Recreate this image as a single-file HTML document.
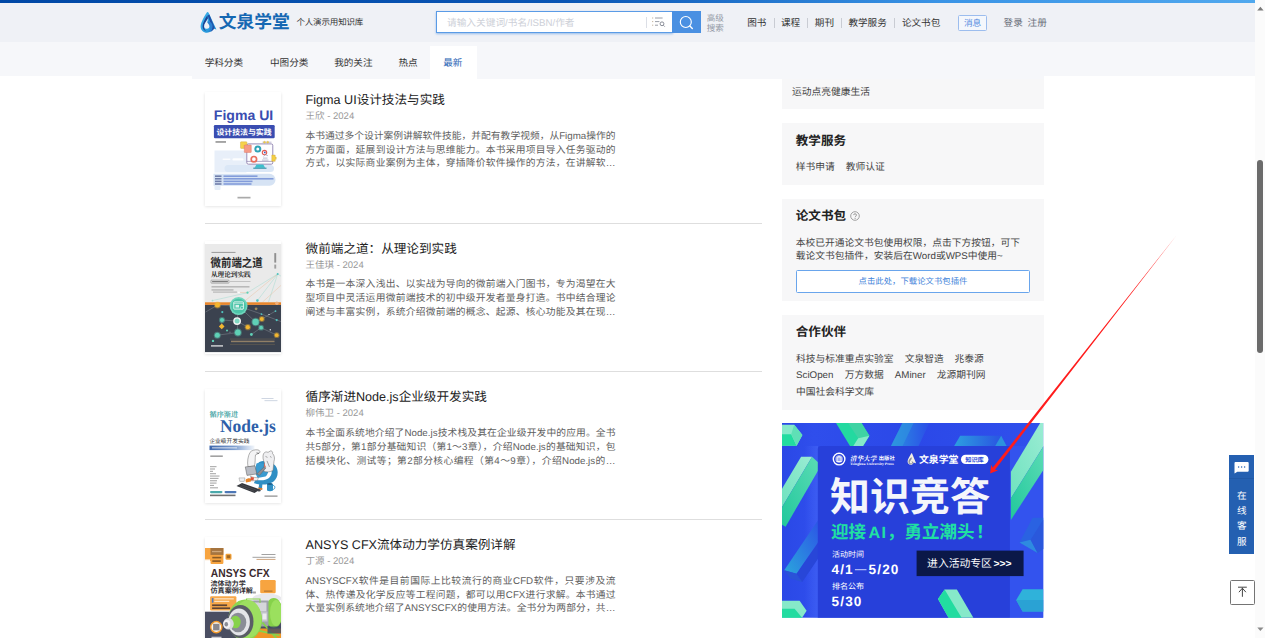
<!DOCTYPE html>
<html lang="zh-CN"><head><meta charset="utf-8"><title>文泉学堂</title><style>
*{margin:0;padding:0;box-sizing:border-box}
html,body{width:1265px;height:638px;overflow:hidden;background:#fff}
body{position:relative;text-rendering:geometricPrecision;font-family:"Liberation Sans","Noto Sans CJK SC",sans-serif;font-size:9.6px;color:#333;line-height:13.6px}
.abs{position:absolute}
.nw{white-space:nowrap}
#topbar{left:0;top:0;width:1254.5px;height:3.4px;background:linear-gradient(90deg,#0048a6 0%,#0a55b4 45%,#3a94e6 75%,#50a8ee 100%)}
#header{left:0;top:0;width:1254.5px;height:41.7px;background:#eff1f6}
#tabs{left:0;top:41.7px;width:1254.5px;height:34.8px;background:#f6f7fa}
#tabs2{left:192px;top:41.7px;width:851.8px;height:37.8px;background:#f6f7fa}
#tabact{left:430.4px;top:45.6px;width:46.2px;height:33.9px;background:#fff}
.tab{top:57.4px;height:14px;line-height:14px;font-size:9.6px;color:#333}
.hnav{top:17.2px;height:14px;line-height:14px;font-size:9.6px;color:#333}
.sep{top:18.1px;width:1px;height:9.5px;background:#c9ccd3}
.bk{left:205.2px;width:75.8px;height:113.8px;background:#fff;box-shadow:0 .8px 3px rgba(0,0,0,.13);overflow:hidden}
.bt{left:305.6px;font-size:12.6px;line-height:16px;color:#222}
.ba{left:305.6px;font-size:9.5px;line-height:12px;color:#999}
.bd{left:305.6px;width:309.9px;font-size:9.75px;line-height:13.85px;color:#606060;text-align:justify;text-align-last:justify}
.hr{left:204.6px;width:557.6px;height:1px;background:#dedede}
.sb{left:781.8px;width:262px;background:#f7f7f8}
.sh{left:795.8px;font-size:12.55px;line-height:16px;font-weight:bold;color:#222}
.sl{left:795.8px;font-size:9.75px;line-height:12px;color:#444}
svg text{font-family:"Liberation Sans","Noto Sans CJK SC",sans-serif}
svg text.srf{font-family:"Liberation Serif","Noto Serif CJK SC",serif}
</style></head><body>
<div id="header" class="abs"></div>
<div id="topbar" class="abs"></div>
<svg class="abs" style="left:199px;top:9px" width="96" height="28" viewBox="0 0 96 28"><defs><linearGradient id="lg1" x1="0" y1="0" x2="1" y2="1"><stop offset="0" stop-color="#3fb2ea"/><stop offset="1" stop-color="#1d8fd6"/></linearGradient></defs><g transform="translate(-199,-9)"><path d="M207 12.200C205.500 14.500 200.600 22 200.600 26.400C200.600 30 203.400 32.700 207 32.700C210 32.700 212.600 31 213.200 28.600L216.400 29.600L208.600 12.800C208.200 12 207.500 11.800 207 12.200Z" fill="url(#lg1)"/><path d="M207.400 15.200C205 19 202.600 23 202.600 26.200C202.600 28.600 204 30.600 206.400 31.200C204.600 29.800 204 28 204.100 26.200C204.200 24 206.500 21 207.900 18.600Z" fill="#1c4394"/><path d="M207.700 15.400L209.400 14.600L214.600 27.600C214 29.600 212.600 31 210.400 31.900C212 30 212.200 28.200 211.500 26.300Z" fill="#1f4fa6"/><path d="M207.200 22C208.400 20.800 210.600 21.600 211.800 23.600C213 25.600 212.800 28 211.600 29.800C210.600 31.200 209 32 207.400 32.100C209.400 31 210.200 29.400 209.900 27.400C209.600 25.400 208.200 23.600 207.200 22Z" fill="#2a7fd0"/><path d="M207.900 18.600C206.500 21 204.100 24 204.100 26.200C204.100 27.800 205.400 28.800 207 28.800C208.600 28.800 209.600 27.600 209.400 26C209.200 24.600 208 23.400 207.200 22.200C207.600 21 208 19.800 207.900 18.600Z" fill="#eff1f6"/></g><text x="19.7" y="19.4" font-size="17.8" font-weight="bold" fill="#1568b3" textLength="71" lengthAdjust="spacingAndGlyphs">文泉学堂</text></svg>
<div class="abs nw" style="left:296.4px;top:16.4px;font-size:8.5px;line-height:12px;color:#333;letter-spacing:-.15px">个人演示用知识库</div>
<div class="abs" style="left:436.2px;top:10.9px;width:236.4px;height:22.5px;background:#fff;border:1px solid #5a9be6;box-shadow:0 1px 2px rgba(74,144,226,.55)"></div>
<div class="abs nw" style="left:447px;top:16.9px;font-size:9.7px;line-height:14px;color:#cdd0d8">请输入关键词/书名/ISBN/作者</div>
<div class="abs" style="left:646px;top:16.8px;width:1px;height:11px;background:#dcdfe6"></div>
<svg class="abs" style="left:651px;top:15px" width="16" height="14" viewBox="0 0 16 14"><g stroke="#9a9ea8" stroke-width="1" fill="none"><path d="M1.2 3h1M1.2 6.6h1M1.2 10.2h1" stroke="#b9a58a"/><path d="M4 3h7.6M4 6.6h4.400M4 10.2h3"/><circle cx="11" cy="8.8" r="1.9" stroke="#8a8e98"/><path d="M12.4 10.3l1.3 1.3" stroke="#8a8e98"/></g></svg>
<div class="abs" style="left:672.2px;top:10.8px;width:28.6px;height:22.4px;background:#4a90e2"></div>
<svg class="abs" style="left:676px;top:13px" width="22" height="20" viewBox="0 0 22 20"><circle cx="9.8" cy="9" r="5.5" fill="none" stroke="#fff" stroke-width="1.15"/><path d="M13.9 13.1l2.4 2.4" stroke="#fff" stroke-width="1.4" stroke-linecap="round"/></svg>
<div class="abs nw" style="left:706.8px;top:14px;font-size:8.5px;line-height:9.9px;color:#949aa6">高级<br>搜索</div>
<div class="abs nw hnav" style="left:747.2px">图书</div>
<div class="abs nw hnav" style="left:780.9px">课程</div>
<div class="abs nw hnav" style="left:814.8px">期刊</div>
<div class="abs nw hnav" style="left:848.4px">教学服务</div>
<div class="abs nw hnav" style="left:901.9px">论文书包</div>
<div class="abs sep" style="left:774px"></div>
<div class="abs sep" style="left:807.2px"></div>
<div class="abs sep" style="left:841.2px"></div>
<div class="abs sep" style="left:894.2px"></div>
<div class="abs nw" style="left:958px;top:15px;width:29.2px;height:15.6px;border:1px solid #9cbdee;border-radius:1.5px;background:#f4f7fc;color:#4f88de;font-size:8.7px;line-height:15.4px;text-align:center">消息</div>
<div class="abs nw hnav" style="left:1003.6px;color:#6a6f7a">登录</div>
<div class="abs nw hnav" style="left:1027.6px;color:#6a6f7a">注册</div>
<div id="tabs" class="abs"></div>
<div id="tabs2" class="abs"></div>
<div id="tabact" class="abs"></div>
<div class="abs nw tab" style="left:204.7px">学科分类</div>
<div class="abs nw tab" style="left:270.0px">中图分类</div>
<div class="abs nw tab" style="left:334.2px">我的关注</div>
<div class="abs nw tab" style="left:398.4px">热点</div>
<div class="abs nw tab" style="left:443.2px;color:#2b66b5">最新</div>
<div class="abs bk" style="top:92.1px"><svg class="abs" style="left:-.7px;top:-.7px" width="77.4" height="114.4" viewBox="204.5 91.4 77.4 114.4"><path d="M214 151h27c3 0 5 2 5 5v17h-32z" fill="#e8eff9"/><rect x="224" y="165.500" width="49.500" height="7" rx="3.500" fill="#dbe7f6"/><path d="M213 174.200h56a6 6 0 0 1 0 12h-56z" fill="#d6e3f4"/><rect x="214" y="186" width="6" height="4.500" rx="1" fill="#e4edf8"/><rect x="232" y="158.600" width="11" height="2.400" rx="1.200" fill="#fff" opacity=".9"/><rect x="222" y="158.900" width="8" height="1.600" rx=".8" fill="#fff" opacity=".8"/><text x="213.3" y="120.8" font-size="13.8" font-weight="bold" fill="#3a4db1" textLength="59.5" lengthAdjust="spacingAndGlyphs">Figma UI</text><rect x="213.400" y="125.500" width="60.800" height="13.200" rx="1.200" fill="#3a4db1"/><text x="215.9" y="135" font-size="7.9" font-weight="bold" fill="#fff" textLength="55.2" lengthAdjust="spacingAndGlyphs">设计技法与实践</text><rect x="215" y="141.500" width="10.500" height="1.700" fill="#555" opacity=".6"/><g fill="none"><rect x="246.300" y="144.300" width="26" height="20.300" rx="1.500" fill="#fdfdff" stroke="#7d6fa3" stroke-width=".8"/><path d="M246.300 161.800h26" stroke="#7d6fa3" stroke-width=".6"/><path d="M256 164.800l-1.800 3.400h10.400l-1.800-3.400z" fill="#3cc0cc"/><path d="M252.800 168.600h13.200" stroke="#2a8fa6" stroke-width="1.100"/><rect x="240" y="142.200" width="6.400" height="6.600" rx=".6" fill="#f6d24a" stroke="#c9a43a" stroke-width=".4"/><rect x="243.800" y="145.300" width="7" height="7.600" rx=".6" fill="#f59a86" stroke="#d9705c" stroke-width=".4"/><circle cx="257.300" cy="149.500" r="2.500" stroke="#2fa3b6" stroke-width="2"/><circle cx="264" cy="153" r="2.200" stroke="#e25c54" stroke-width="1.100"/><circle cx="264.300" cy="152.800" r=".9" fill="#3a5fc0"/><circle cx="253.400" cy="159.600" r="2.700" stroke="#e8705e" stroke-width="1.700"/><path d="M271.300 155.500h3.400v2h1v2.200h-1v2h-3.400z" fill="#f4cf46" stroke="#c9a43a" stroke-width=".4"/><path d="M261.500 160.500h6.500M262.500 158.500h4.500M263 156.700l2-1.500 2.500 1" stroke="#8a90b0" stroke-width=".6"/><path d="M262 142.600h9" stroke="#7d6fa3" stroke-width=".5"/><circle cx="264" cy="142.600" r="1" fill="#f4cf46" stroke="#c9a43a" stroke-width=".3"/><circle cx="267.200" cy="142.600" r="1" fill="#f4cf46" stroke="#c9a43a" stroke-width=".3"/></g><rect x="214.5" y="175.8" width="6.5" height="1.6" fill="#2b3a7a" opacity="0.6"/><rect x="214.5" y="178.4" width="6.5" height="1.6" fill="#2b3a7a" opacity="0.6"/><rect x="214.5" y="181" width="6.5" height="1.6" fill="#2b3a7a" opacity="0.6"/><rect x="214.5" y="183.6" width="6.5" height="1.6" fill="#2b3a7a" opacity="0.6"/><rect x="223" y="175.8" width="34" height="1.6" fill="#3f62c4" opacity="0.55"/><rect x="223" y="178.4" width="50" height="1.6" fill="#3f62c4" opacity="0.55"/><rect x="223" y="181" width="29" height="1.6" fill="#3f62c4" opacity="0.55"/><rect x="223" y="183.6" width="28" height="1.6" fill="#3f62c4" opacity="0.55"/><rect x="237" y="197.200" width="13" height="1.700" fill="#555" opacity=".5"/></svg></div>
<div class="abs nw bt" style="top:92.2px">Figma UI设计技法与实践</div>
<div class="abs nw ba" style="top:111.1px">王欣 - 2024</div>
<div class="abs nw bd" style="top:129.6px">本书通过多个设计案例讲解软件技能，并配有教学视频，从Figma操作的</div>
<div class="abs nw bd" style="top:143.5px">方方面面，延展到设计方法与思维能力。本书采用项目导入任务驱动的</div>
<div class="abs nw bd" style="top:157.3px">方式，以实际商业案例为主体，穿插降价软件操作的方法，在讲解软…</div>
<div class="abs hr" style="top:222.9px"></div>
<div class="abs bk" style="top:240.6px"><svg class="abs" style="left:-.7px;top:-.7px" width="77.4" height="114.4" viewBox="204.5 239.9 77.4 114.4"><rect x="204.500" y="243.900" width="77.400" height="59" fill="#eaeaea"/><rect x="204.500" y="304.600" width="77.400" height="47.400" fill="#3b424f"/><g stroke-width=".45" fill="none"><path d="M277.200 273.900L247 292.600M277.200 273.900L256.900 300.500M277.200 273.900L268 302M277.200 273.900L281.900 277M247 292.600L212 300.500" stroke="#8fd6c8" opacity=".85"/><path d="M277.200 273.900L243 302M281.900 284L262 302M247 292.600L238.500 292.300" stroke="#e9b48a" opacity=".8"/><path d="M238.100 306L217 305M238.100 306L236.600 321M238.100 306L255.100 321.900M255.100 321.900L261.300 318.900M255.100 321.900L260.600 327.600M236.600 321L221.500 319.900M236.600 321L237.400 332.400M236.600 321L247.300 327.100M221.500 319.900L221.200 326.300M261.300 318.900L275 311M260.600 327.600L276.200 335.100M237.400 332.400L216.800 335.100M238.100 306L261 314M217 305L205 312M250.900 334.400L260.600 327.600M261 314L281.900 322" stroke="#cfd6dc" opacity=".55"/></g><rect x="204.500" y="302.200" width="77.400" height="2.600" fill="#e8862c"/><rect x="211" y="251.8" width="24" height="1.100" fill="#555" opacity="0.5"/><text x="210.100" y="267" font-size="12" font-weight="bold" fill="#2a2a2a" textLength="52" lengthAdjust="spacingAndGlyphs">微前端之道</text><text class="srf" x="210.400" y="277" font-size="7" font-weight="bold" fill="#2a2a2a" textLength="39.800" lengthAdjust="spacingAndGlyphs">从理论到实践</text><rect x="210.500" y="280" width="18" height="3.100" rx=".6" fill="none" stroke="#444" stroke-width=".35"/><rect x="211.600" y="281" width="15.800" height="1.100" fill="#333" opacity="0.65"/><rect x="229.500" y="281.300" width="20.500" height=".3" fill="#666"/><rect x="211" y="286.200" width="38" height="1.100" fill="#555" opacity="0.45"/><rect x="211" y="289.300" width="22" height="1.100" fill="#555" opacity="0.45"/><rect x="212.500" y="291.500" width="24" height="1" fill="#555" opacity="0.4"/><rect x="273.800" y="253" width="1.900" height="9.500" fill="#444" opacity=".55"/><rect x="273.800" y="264.500" width="1.900" height="4" fill="#444" opacity=".45"/><circle cx="277.2" cy="273.9" r="1" fill="#4fc4c0"/><circle cx="247" cy="292.6" r="1.1" fill="#5fd0b6"/><circle cx="238.5" cy="292.3" r="0.9" fill="#fff"/><circle cx="256.9" cy="300.5" r="1.3" fill="#4fc4c0"/><circle cx="212" cy="300.5" r="0.9" fill="#9adfd0"/><circle cx="238.100" cy="306" r="9" fill="#6fd6bd"/><circle cx="238.100" cy="306" r="7.400" fill="#4cc4a8"/><rect x="233.300" y="301.800" width="9.600" height="7.200" rx=".5" fill="none" stroke="#fff" stroke-width=".8"/><path d="M233.300 303.300h9.600" stroke="#fff" stroke-width=".5"/><rect x="235" y="304.800" width="3.500" height="2.600" fill="#fff" opacity=".8"/><circle cx="241.400" cy="307.600" r="1.500" fill="#4cc4a8" stroke="#fff" stroke-width=".5"/><circle cx="217" cy="305" r="3.5" fill="#f2b630" opacity="0.4"/><circle cx="217" cy="305" r="2.5" fill="#f2b630"/><circle cx="221.5" cy="319.9" r="3.1" fill="#5fd0b6" opacity="0.4"/><circle cx="221.5" cy="319.9" r="2.1" fill="#5fd0b6"/><circle cx="236.600" cy="321" r="3.900" fill="#f4f4f4"/><circle cx="236.600" cy="321" r="2.500" fill="#7fd8c2"/><circle cx="255.1" cy="321.9" r="4.2" fill="#5fd0b6" opacity="0.4"/><circle cx="255.1" cy="321.9" r="3.2" fill="#5fd0b6"/><circle cx="261.3" cy="318.9" r="3" fill="#f2b630" opacity="0.4"/><circle cx="261.3" cy="318.9" r="2" fill="#f2b630"/><rect x="219.200" y="324.300" width="4" height="4" fill="#f2b630" transform="rotate(45 221.200 326.300)"/><circle cx="247.3" cy="327.1" r="3.1" fill="#f2b630" opacity="0.4"/><circle cx="247.3" cy="327.1" r="2.1" fill="#f2b630"/><circle cx="260.6" cy="327.6" r="2.9" fill="#5fd0b6" opacity="0.4"/><circle cx="260.6" cy="327.6" r="1.9" fill="#5fd0b6"/><circle cx="237.4" cy="332.4" r="3.9" fill="#5fd0b6" opacity="0.4"/><circle cx="237.4" cy="332.4" r="2.9" fill="#5fd0b6"/><circle cx="216.8" cy="335.1" r="3.5" fill="#5fd0b6" opacity="0.4"/><circle cx="216.8" cy="335.1" r="2.5" fill="#5fd0b6"/><circle cx="276.2" cy="335.1" r="2.9" fill="#f2b630" opacity="0.4"/><circle cx="276.2" cy="335.1" r="1.9" fill="#f2b630"/><circle cx="250.9" cy="334.4" r="1.4" fill="#5fd0b6"/><circle cx="212.5" cy="340.8" r="1.2" fill="#5fd0b6"/><circle cx="221.8" cy="312" r="1.1" fill="#4fc4c0"/><circle cx="276.2" cy="320" r="1.1" fill="#4fc4c0"/><circle cx="275" cy="311" r="0.9" fill="#4fc4c0"/><circle cx="261" cy="314" r="0.9" fill="#4fc4c0"/><circle cx="255.6" cy="308.7" r="1.4" fill="#a08a5a"/><circle cx="276.4" cy="303.2" r="1.7" fill="#f2b07a"/><circle cx="226.5" cy="330.5" r="1" fill="#5fd0b6"/><circle cx="229.5" cy="332.8" r="1.3" fill="#565d6b"/><rect x="269.200" y="329.100" width="1.200" height="1.200" fill="#fff"/><rect x="268" y="313.900" width="1" height="1" fill="#fff"/><path d="M229.500 339h45M229.500 344.300h45" stroke="#d9a85a" stroke-width=".25" opacity=".8"/><rect x="230.500" y="340.600" width="43.500" height="1.500" fill="#d9b27a" opacity="0.55"/><rect x="210.500" y="345" width="12" height="1.600" fill="#f0f0f0" opacity="0.75"/></svg></div>
<div class="abs nw bt" style="top:240.7px">微前端之道：从理论到实践</div>
<div class="abs nw ba" style="top:259.6px">王佳琪 - 2024</div>
<div class="abs nw bd" style="top:278.1px">本书是一本深入浅出、以实战为导向的微前端入门图书，专为渴望在大</div>
<div class="abs nw bd" style="top:292.0px">型项目中灵活运用微前端技术的初中级开发者量身打造。书中结合理论</div>
<div class="abs nw bd" style="top:305.8px">阐述与丰富实例，系统介绍微前端的概念、起源、核心功能及其在现…</div>
<div class="abs hr" style="top:370.7px"></div>
<div class="abs bk" style="top:389.3px"><svg class="abs" style="left:-.7px;top:-.7px" width="77.4" height="114.4" viewBox="204.5 388.6 77.4 114.4"><rect x="261" y="397.800" width="12" height="0.800" fill="#7a8db0" opacity="0.45"/><rect x="264" y="399.900" width="13" height="0.800" fill="#7a8db0" opacity="0.45"/><text class="srf" x="209" y="416.200" font-size="7.300" font-weight="bold" fill="#3a9f9f" textLength="28.600" lengthAdjust="spacingAndGlyphs">循序渐进</text><text class="srf" x="219.500" y="432" font-size="18" font-weight="bold" fill="#2e5fa9" textLength="55.800" lengthAdjust="spacingAndGlyphs">Node.js</text><text x="208.900" y="442.700" font-size="5.700" fill="#2a2a2a" textLength="40" lengthAdjust="spacingAndGlyphs">企业级开发实践</text><defs><linearGradient id="c2g" x1="0" y1="0" x2="1" y2="0"><stop offset="0" stop-color="#3d66ab"/><stop offset=".55" stop-color="#7f9fd0"/><stop offset="1" stop-color="#f2f6fb"/></linearGradient></defs><rect x="209" y="445.200" width="45" height="4.500" fill="url(#c2g)"/><rect x="211.500" y="446.900" width="25" height="1.100" fill="#fff" opacity=".7"/><rect x="209.800" y="455" width="12.500" height="1.600" fill="#555" opacity="0.55"/><rect x="209.500" y="465.700" width="6.500" height="1.100" fill="#555" opacity="0.5"/><rect x="209.500" y="468.050" width="5" height="1.100" fill="#555" opacity="0.5"/><rect x="209.500" y="470.400" width="3" height="1.100" fill="#555" opacity="0.5"/><rect x="209.500" y="472.750" width="6" height="1.100" fill="#555" opacity="0.5"/><rect x="209.500" y="475.100" width="9.500" height="1.100" fill="#555" opacity="0.5"/><rect x="209.500" y="477.450" width="8.500" height="1.100" fill="#555" opacity="0.5"/><rect x="209.500" y="479.800" width="7" height="1.100" fill="#555" opacity="0.5"/><rect x="209.500" y="482.150" width="6.500" height="1.100" fill="#555" opacity="0.5"/><rect x="209.500" y="484.500" width="4" height="1.100" fill="#555" opacity="0.5"/><rect x="209.500" y="486.850" width="8" height="1.100" fill="#555" opacity="0.5"/><g stroke-linejoin="round"><path d="M258 462c6-3 14-1 17.500 4 3 5 2 12-3 15.500-5 3-13 3.500-19 1l1.500-3.500c5 1.500 10 1 13.500-1.500 3-2.500 3.500-6.500 1.500-9.500-2.500-3.500-7.500-4.500-11-3z" fill="#2f8fc4"/><path d="M256 463c4-1.500 9 .5 11 4 1.500 3 .5 7-2 9l-8 1.500-3-7z" fill="#3a9bd0"/><path d="M259 482l-1 5.500 3.500.5.500-5.500z" fill="#2f8fc4"/><path d="M258 487l4 .800-.300 1.800-4-.800z" fill="#d9782a"/><path d="M249.500 452c1.500-2 5-3 8-2.500 2 .5 2.500 2 1.500 3l-4 2c-.500 3 0 7-1 11l-6.500 1c-1-5 0-11 2-14.500z" fill="#f4f4f5" stroke="#666" stroke-width=".5"/><path d="M256 452.500l2.500.500" stroke="#333" stroke-width=".6" fill="none"/><path d="M263 453.500c1-2 3-2.500 4.500-1.500l2.500-1.500c1.500 0 2.500 1 2 2.500 2 2 2.500 5 1.500 8l-1 9c-3 2-7 2-9.500.500l1-8c-1.500-3-2-6.500-1-9z" fill="#efeff1" stroke="#666" stroke-width=".5"/><path d="M265 456l2 1m2.500-1l1.500 1m-4.500 3.500l2.500 6" stroke="#555" stroke-width=".5" fill="none"/><path d="M263.500 462l1.800 4.500-1.300.500z" fill="#e0523a"/><path d="M244.800 466.500l9.700-1 1.800 8-9.800 1.500z" fill="#b9bcc4" stroke="#555" stroke-width=".5"/><path d="M256.300 473.500l7.200-7 2 1-6.500 7.500z" fill="#8a8d96" stroke="#555" stroke-width=".4"/><path d="M250 475.500c2 1.500 5 2 8 1.500l-1 3-6 .5z" fill="#f1f1f3" stroke="#666" stroke-width=".4"/><path d="M245 479.500c1.500-1.500 4-2 6-1l-.5 2.500-5 1z" fill="#e8872a"/><path d="M250.500 476.500l3 .5-.500 3-3-.500z" fill="#e0523a"/><path d="M238.500 477.500h6l-.800 3.500h-4.400z" fill="#eef0f2" stroke="#777" stroke-width=".4"/><path d="M236 485.600l5.500-3.100 18 6.500-5.500 3.500z" fill="#34363c"/><path d="M238.500 485.400l15.500 5.600M240.500 484.200l15.500 5.600" stroke="#777" stroke-width=".35" fill="none"/><ellipse cx="258.500" cy="490" rx="1.800" ry="1.100" fill="#44464c"/><path d="M266.500 483.500c2-.8 4.500-.8 6 0v6.500c-1.500 1-4.500 1-6 0z" fill="#2f8fc4"/><ellipse cx="269.250" cy="483.600" rx="2.750" ry=".9" fill="#1f5f8a"/><path d="M272.500 485c2.500 0 2.500 4 0 4" stroke="#2f8fc4" stroke-width=".9" fill="none"/></g><rect x="209.500" y="490.600" width="12.500" height="2.200" rx="1.100" fill="#2a9a9c" opacity=".85"/><rect x="224" y="490.600" width="12" height="2.200" rx="1.100" fill="#2e5fa9" opacity=".85"/><rect x="209.500" y="494.200" width="25.500" height="1.600" fill="#333" opacity="0.7"/><rect x="264" y="495" width="13" height="1.500" fill="#555" opacity="0.55"/></svg></div>
<div class="abs nw bt" style="top:389.4px">循序渐进Node.js企业级开发实践</div>
<div class="abs nw ba" style="top:408.3px">柳伟卫 - 2024</div>
<div class="abs nw bd" style="top:426.8px">本书全面系统地介绍了Node.js技术栈及其在企业级开发中的应用。全书</div>
<div class="abs nw bd" style="top:440.7px">共5部分，第1部分基础知识（第1～3章），介绍Node.js的基础知识，包</div>
<div class="abs nw bd" style="top:454.5px">括模块化、测试等；第2部分核心编程（第4～9章），介绍Node.js的…</div>
<div class="abs hr" style="top:518.8px"></div>
<div class="abs bk" style="top:537.2px"><svg class="abs" style="left:-.7px;top:-.7px" width="77.4" height="114.4" viewBox="204.5 536.5 77.4 114.4"><rect x="204.500" y="611.200" width="77.400" height="40" fill="#4a4e62"/><path d="M204.500 547.500h18.400v14.800a1.2 1.2 0 0 1-1.2 1.2h-10.500a1.2 1.2 0 0 1-1.2-1.2v-1.800h-5.500z" fill="#f7a440"/><rect x="210" y="547.500" width="12.900" height="6.900" fill="#a5743f"/><rect x="211.500" y="550.400" width="9.500" height="1.300" fill="#d9b48a" opacity="0.8"/><rect x="211.800" y="556.300" width="9" height="1.600" fill="#5a3a1a" opacity="0.7"/><rect x="211.800" y="559.800" width="8.500" height="1.600" fill="#5a3a1a" opacity="0.7"/><rect x="204.500" y="559" width="5" height="1.400" fill="#fff"/><rect x="225" y="553.300" width="6" height="5.900" rx="1.300" fill="#f2a23a"/><rect x="226.200" y="554.700" width="3.600" height="3" fill="#6b3f14" opacity=".6"/><rect x="261" y="553.500" width="14" height="1" fill="#555" opacity="0.55"/><rect x="252" y="556.300" width="23" height="1" fill="#555" opacity="0.55"/><rect x="256" y="558.400" width="19" height="1" fill="#b06a2a" opacity="0.6"/><text x="210.300" y="576.700" font-size="11.700" font-weight="bold" fill="#3b2a2d" textLength="58.800" lengthAdjust="spacingAndGlyphs">ANSYS CFX</text><text x="210" y="585.300" font-size="7" font-weight="bold" fill="#333035" textLength="35.200" lengthAdjust="spacingAndGlyphs">流体动力学</text><text x="210" y="592.500" font-size="7" font-weight="bold" fill="#333035" textLength="42.400" lengthAdjust="spacingAndGlyphs">仿真案例详解</text><rect x="252" y="591" width="3.400" height="2" fill="#666" opacity=".6"/><rect x="259.700" y="579.500" width="15.500" height="13.300" rx="1.200" fill="#f7a440"/><rect x="263.500" y="590" width="8.500" height="1.300" fill="#8a5a28" opacity="0.55"/><ellipse cx="266.500" cy="598" rx="14.500" ry="5" fill="#e6e6ea" opacity=".9"/><rect x="209.600" y="595.800" width="26.300" height="14.200" rx="1.300" fill="#f7a84a"/><rect x="211.400" y="597.600" width="1.500" height="4.600" fill="#4a78c0"/><rect x="213.800" y="597.800" width="19.500" height="1.100" fill="#fff" opacity="0.75"/><rect x="213.800" y="600.300" width="15" height="1.100" fill="#fff" opacity="0.75"/><rect x="211.600" y="603.900" width="15" height="1.700" fill="#3a2a2e" opacity="0.8"/><rect x="211.600" y="606.900" width="18" height="1.700" fill="#3a2a2e" opacity="0.8"/><ellipse cx="273.300" cy="612.500" rx="9" ry="15" fill="#86d24a"/><ellipse cx="275.500" cy="612.500" rx="6" ry="13" fill="#9be05e"/><path d="M250 600h18v26h-18z" fill="#9ea1aa"/><path d="M254 602h12v9h-12z" fill="#d5d6db"/><path d="M258 611h9v10h-9z" fill="#c2c4ca"/><rect x="262" y="613" width="4" height="6" fill="#ececef"/><path d="M246 605v-6.500h13.500v4" fill="none" stroke="#86d24a" stroke-width="1.100"/><path d="M237 628h44v10h-44z" fill="#ef9526"/><path d="M262 622l14 16M257 630l22 5" stroke="#86d24a" stroke-width="1.800" fill="none"/><path d="M267 626h14v7h-14z" fill="#3f4a66" opacity=".8"/><ellipse cx="244.600" cy="619.500" rx="17" ry="20.500" fill="#8cd650"/><ellipse cx="247.500" cy="618.500" rx="13.500" ry="19" fill="#9ee062" opacity=".9"/><ellipse cx="240" cy="621" rx="13" ry="16.500" fill="#5a5d66"/><ellipse cx="238.600" cy="621.500" rx="10.800" ry="13.600" fill="#e4e5e9"/><ellipse cx="237.500" cy="622" rx="8.300" ry="9.800" fill="#8a8d96"/><ellipse cx="235" cy="621.500" rx="5.200" ry="6.300" fill="#86d24a"/><ellipse cx="228" cy="623.300" rx="5.300" ry="5.800" fill="#d9dade"/><ellipse cx="226.300" cy="623.600" rx="3.600" ry="4.200" fill="#f2f2f4"/><ellipse cx="225.800" cy="623.800" rx="1.800" ry="2.200" fill="#8a8d96"/><circle cx="215.800" cy="626.600" r="5.600" fill="#fbf6ec" stroke="#f39a2c" stroke-width="1.400"/><rect x="212.600" y="623.300" width="6.400" height="6.600" fill="#5a5a66" opacity=".7"/><rect x="211" y="636.200" width="10" height="1.400" fill="#e8e8ee" opacity="0.8"/></svg></div>
<div class="abs nw bt" style="top:537.3px">ANSYS CFX流体动力学仿真案例详解</div>
<div class="abs nw ba" style="top:556.2px">丁源 - 2024</div>
<div class="abs nw bd" style="top:574.7px">ANSYSCFX软件是目前国际上比较流行的商业CFD软件，只要涉及流</div>
<div class="abs nw bd" style="top:588.6px">体、热传递及化学反应等工程问题，都可以用CFX进行求解。本书通过</div>
<div class="abs nw bd" style="top:602.4px">大量实例系统地介绍了ANSYSCFX的使用方法。全书分为两部分，共…</div>
<div class="abs sb" style="top:79.4px;height:29.3px"></div>
<div class="abs nw sl" style="left:792px;top:87.3px">运动点亮健康生活</div>
<div class="abs sb" style="top:123.4px;height:61.3px"></div>
<div class="abs nw sh" style="top:132.7px">教学服务</div>
<div class="abs nw sl" style="top:162.4px">样书申请</div><div class="abs nw sl" style="left:845.8px;top:162.4px">教师认证</div>
<div class="abs sb" style="top:199px;height:101.6px"></div>
<div class="abs nw sh" style="top:208px">论文书包</div>
<svg class="abs" style="left:850px;top:210.900px" width="10" height="10" viewBox="0 0 10 10"><circle cx="5" cy="5" r="4.300" fill="none" stroke="#909090" stroke-width=".85"/><path d="M3.600 4.100c0-1.800 2.900-1.800 2.900 0 0 1-1.400 1.100-1.400 2.200" fill="none" stroke="#888" stroke-width=".85"/><circle cx="5.100" cy="7.500" r=".55" fill="#888"/></svg>
<div class="abs nw sl" style="top:236.7px;line-height:13.3px">本校已开通论文书包使用权限，点击下方按钮，可下<br>载论文书包插件，安装后在Word或WPS中使用~</div>
<div class="abs nw" style="left:795.8px;top:270px;width:234.4px;height:22.6px;border:1px solid #69a5ec;border-radius:1.5px;background:#fff;color:#4585da;font-size:8.4px;line-height:21.6px;text-align:center">点击此处，下载论文书包插件</div>
<div class="abs sb" style="top:314.7px;height:95px"></div>
<div class="abs nw sh" style="top:324.3px">合作伙伴</div>
<div class="abs nw sl" style="left:796px;top:354.1px">科技与标准重点实验室</div><div class="abs nw sl" style="left:904.8px;top:354.1px">文泉智造</div><div class="abs nw sl" style="left:954.6px;top:354.1px">兆泰源</div>
<div class="abs nw sl" style="left:796px;top:370.4px">SciOpen</div><div class="abs nw sl" style="left:844.8px;top:370.4px">万方数据</div><div class="abs nw sl" style="left:894.8px;top:370.4px">AMiner</div><div class="abs nw sl" style="left:936.8px;top:370.4px">龙源期刊网</div>
<div class="abs nw sl" style="left:796px;top:386.6px">中国社会科学文库</div>
<svg class="abs" style="left:782.4px;top:423.3px" width="261.2" height="194.7" viewBox="782.4 423.3 261.2 194.7"><defs><linearGradient id="b1" x1="0" y1="0" x2="1" y2="0"><stop offset="0" stop-color="#2c9fe0"/><stop offset=".8" stop-color="#2a5be2"/><stop offset="1" stop-color="#2a50e4"/></linearGradient><linearGradient id="b2" x1="0" y1="1" x2="1" y2="0"><stop offset="0" stop-color="#2aa6dc"/><stop offset="1" stop-color="#2c55e6"/></linearGradient><linearGradient id="b3" x1="0" y1="0" x2="1" y2="0"><stop offset="0" stop-color="#2a8fe0"/><stop offset=".5" stop-color="#2b6fe4"/><stop offset="1" stop-color="#2b4ee8"/></linearGradient><linearGradient id="g1" x1="0" y1="1" x2="1" y2="0"><stop offset="0" stop-color="#6fe2bf"/><stop offset="1" stop-color="#9aecd3"/></linearGradient><linearGradient id="g2" x1="0" y1="1" x2="1" y2="0"><stop offset="0" stop-color="#22c89c"/><stop offset="1" stop-color="#5adbb4"/></linearGradient><linearGradient id="bgG" x1="0" y1="0" x2="1" y2="0"><stop offset="0" stop-color="#2a48e6"/><stop offset=".12" stop-color="#2f4eec"/><stop offset=".5" stop-color="#2b48e8"/><stop offset="1" stop-color="#3050ec"/></linearGradient><linearGradient id="lf" x1="0" y1="0" x2="1" y2="0"><stop offset="0" stop-color="#4566f6" stop-opacity="0"/><stop offset="1" stop-color="#4566f6" stop-opacity=".6"/></linearGradient></defs><rect x="782.4" y="423.3" width="261.2" height="194.7" fill="url(#bgG)"/><rect x="1010.3" y="446.3" width="33.3" height="171.7" fill="#3353ee"/><rect x="805" y="446.3" width="13.4" height="171.7" fill="url(#lf)"/><polygon points="782.4,425 794.6,425 802.8,435.3 797,446 782.4,446" fill="#86e9c9"/><polygon points="782.4,434.6 791.6,434.6 797,446 782.4,446" fill="#22dca0"/><polygon points="794.6,425 802.8,435.3 797,446 791.6,434.6" fill="#5fe0b6"/><polygon points="836.4,423.3 861.9,423.3 869.8,436 863.5,446.3 850.4,446.3" fill="#23d9a0"/><polygon points="848.5,423.3 861.9,423.3 869.8,436 858.6,438.6" fill="#3fd3a4"/><polygon points="853.7,446.3 858.6,438.6 869.8,436 863.5,446.3" fill="#86e9c9"/><polygon points="891.4,446.3 902.8,423.3 929.7,423.3 919,446.3" fill="url(#b3)"/><polygon points="891.4,446.3 902.8,423.3 914,423.3 903,446.3" fill="#2f9ade" opacity=".55"/><polygon points="954.6,446.3 960.6,436.1 1001.6,436.1 1007,446.3" fill="url(#b1)"/><polygon points="995.6,446.3 1001.6,436.1 1007,446.3" fill="#2c92de"/><polygon points="1040.6,423.3 1043.6,423.3 1043.6,447 1011.3,498.6 1011.3,472" fill="url(#g1)"/><polygon points="1043.6,447 1043.6,470.5 1011.3,520.3 1011.3,498.6" fill="url(#g2)"/><polygon points="1033,518 1043.6,518 1043.6,549.3 1038,553.4 1019.9,542.7" fill="#2a62e2"/><polygon points="1019.9,542.7 1031,540 1038,553.4" fill="#2e8ae0"/><polygon points="1031,540 1043.6,520 1043.6,549.3 1038,553.4" fill="#2a58dc"/><polygon points="1016.6,600.2 1023,589.6 1043.6,589.6 1043.6,611.8 1023,611.8" fill="#2fb2da"/><polygon points="1016.6,600.2 1043.6,600.2 1043.6,611.8 1023,611.8" fill="#2aa2d4"/><polygon points="801.5,457 812.5,457 782.4,507.5 782.4,489" fill="url(#g1)"/><polygon points="812.5,457 818.4,462.5 818.4,471 786,527 782.4,525 782.4,507.5" fill="url(#g2)"/><polygon points="818.4,520.5 818.4,542.7 797,574 784.6,570.6" fill="url(#b2)"/><polygon points="784.6,570.6 797,574 802.7,582.2 790.3,578.9" fill="#2a52d8"/><polygon points="818.4,542.7 818.4,559 802.7,582.2 797,574" fill="#2846d8"/><polygon points="782.4,601 800,601 807,611 802.5,618 782.4,618" fill="#86e9c9"/><polygon points="782.4,609 795,609 802.5,618 782.4,618" fill="#22dca0"/><path d="M818.2 618V449.6a3.3 3.3 0 0 1 3.3-3.3H1010.3V618z" fill="#2740da"/><rect x="808" y="446.3" width="10.2" height="171.7" fill="#3b5af2" opacity=".0"/><polygon points="938.4,599.4 945,589.9 957.3,589.9 973.8,618 949,618" fill="#86e9c9"/><polygon points="938.4,599.4 945,589.9 962,618 949,618" fill="#22dca0"/><circle cx="839.5" cy="459.4" r="5.8" fill="none" stroke="#fff" stroke-width="1.4"/><circle cx="839.5" cy="459.4" r="3.8" fill="#fff" opacity=".55"/><path d="M837.6 457.4h3.8v4.4h-3.8z M838.3 456.6h2.4 M836.8 461.8h5.4" stroke="#fff" stroke-width=".7" fill="none"/><text class="srf" x="0.200" y="0.400" font-size="6.700" font-weight="bold" fill="#fff" textLength="26.400" lengthAdjust="spacingAndGlyphs" transform="translate(850.4,460.9) skewX(-10)">清华大学</text><text x="879.200" y="460.400" font-size="5.300" font-weight="bold" fill="#fff" textLength="16" lengthAdjust="spacingAndGlyphs">出版社</text><text class="srf" x="850.500" y="465.600" font-size="3.600" font-weight="bold" fill="#fff" textLength="43.600" lengthAdjust="spacingAndGlyphs">Tsinghua University Press</text><path d="M911.6 453.7c.4-.3.8-.2 1 .3l3.9 9.5c-1.1-.1-1.9-.4-2.4-1-.2 1.5-1.4 2.6-2.900 2.600-1.900 0-3.200-1.400-3.200-3.300 0-2.300 2.100-5.100 3.600-8.100z" fill="#f3efe4"/><path d="M911.7 457.2c.9 1.3.4 2.3-.5 3.400-.9 1.100-1.300 2-.8 2.800.5.8 1.700.6 2-.4.2-.7-.2-1.200-.8-1.400 1.300-.3 2.200.5 1.800 1.700-.5 1.500-2.600 1.800-3.800.7-1.200-1.200-.8-3.100.2-4.500.8-1.100 1.600-1.400 1.900-2.300z" fill="#8b8f9a"/><text x="919.300" y="463.800" font-size="9.900" font-weight="bold" fill="#fff" textLength="39.600" lengthAdjust="spacingAndGlyphs">文泉学堂</text><rect x="961.4" y="455" width="27.4" height="9.4" rx="4.7" fill="#fff"/><text x="965.600" y="462.200" font-size="6.200" font-weight="bold" fill="#2a48d8" textLength="18.600" lengthAdjust="spacingAndGlyphs">知识库</text><text x="830.500" y="511.500" font-size="40" font-weight="bold" fill="#f4f6fb" textLength="160" lengthAdjust="spacingAndGlyphs">知识竞答</text><text y="538.500" font-size="17.500" font-weight="bold" fill="#20e0a2"><tspan x="831.500">迎接</tspan><tspan x="868.800" font-size="16.200" letter-spacing="1.300">AI</tspan><tspan x="887.500">，</tspan><tspan x="904.800">勇立潮头</tspan><tspan x="976.500">！</tspan></text><text x="832.300" y="557.600" font-size="7.900" fill="#fff" textLength="32" lengthAdjust="spacingAndGlyphs">活动时间</text><text x="832" y="574.800" font-size="13.600" font-weight="bold" fill="#fff" textLength="21" lengthAdjust="spacing">4/1</text><rect x="855.3" y="569.6" width="11.6" height=".9" fill="#dfe5ff"/><text x="869" y="574.800" font-size="13.600" font-weight="bold" fill="#fff" textLength="29.800" lengthAdjust="spacing">5/20</text><text x="832.300" y="588.900" font-size="7.900" fill="#fff" textLength="32.200" lengthAdjust="spacingAndGlyphs">排名公布</text><text x="832" y="606.500" font-size="13.600" font-weight="bold" fill="#fff" textLength="29.800" lengthAdjust="spacing">5/30</text><rect x="917" y="550.9" width="107" height="25.5" fill="#0b1848"/><text x="927.500" y="567.700" font-size="10.800" fill="#fff"><tspan>进入活动专区</tspan><tspan x="993.800" font-weight="bold" font-size="10.400">&gt;&gt;&gt;</tspan></text></svg>
<div class="abs" style="left:1229.4px;top:455.3px;width:24.6px;height:98.9px;background:#2460b1"></div>
<div class="abs" style="left:1229.4px;top:478px;width:24.6px;height:1px;background:#2059a6"></div>
<svg class="abs" style="left:1233px;top:460px" width="18" height="16" viewBox="0 0 18 16"><path d="M2.4 2h12.4c.5 0 .9.4.9.9v7.9c0 .5-.4.9-.9.9H4.4L1.5 13.4V2.9c0-.5.4-.9.9-.9z" fill="#fff"/><circle cx="5.6" cy="6.9" r=".75" fill="#2460b1"/><circle cx="8.6" cy="6.9" r=".75" fill="#2460b1"/><circle cx="11.6" cy="6.9" r=".75" fill="#2460b1"/></svg>
<div class="abs" style="left:1229.4px;top:488.7px;width:24.6px;font-size:9.6px;line-height:15.3px;color:#fff;text-align:center">在<br>线<br>客<br>服</div>
<div class="abs" style="left:1230.1px;top:580.1px;width:24.8px;height:24.7px;border:1px solid #747474;border-radius:1.5px;background:#fff"></div>
<svg class="abs" style="left:1235px;top:584px" width="15" height="16" viewBox="0 0 15 16"><g stroke="#444" stroke-width="1" fill="none"><path d="M3 3.200h8.800"/><path d="M7.400 3.600v9.200"/><path d="M3.900 8.200l3.500-4 3.500 4"/></g></svg>
<div class="abs" style="left:1254.5px;top:0;width:10.5px;height:638px;background:#fbfbfb"></div>
<div class="abs" style="left:1256.9px;top:160.4px;width:6.2px;height:192.8px;border-radius:3.1px;background:#6b6b6b"></div>
<svg class="abs" style="left:1254.5px;top:0" width="10.5" height="638" viewBox="0 0 10.5 638"><path d="M2.2 10.4l3.2-3.6 3.2 3.6z" fill="#7a7a7a"/><path d="M2.3 627.6l3.1 3.4 3.1-3.4z" fill="#8a8a8a"/></svg>
<svg class="abs" style="left:0;top:0;pointer-events:none" width="1265" height="638" viewBox="0 0 1265 638"><path d="M1176.6 235.2 L994.98 469.7 L998.26 470.37 L990.1 473.5 L991.18 464.83 L992.62 467.86 Z" fill="#ff1c1c"/></svg>
</body></html>
